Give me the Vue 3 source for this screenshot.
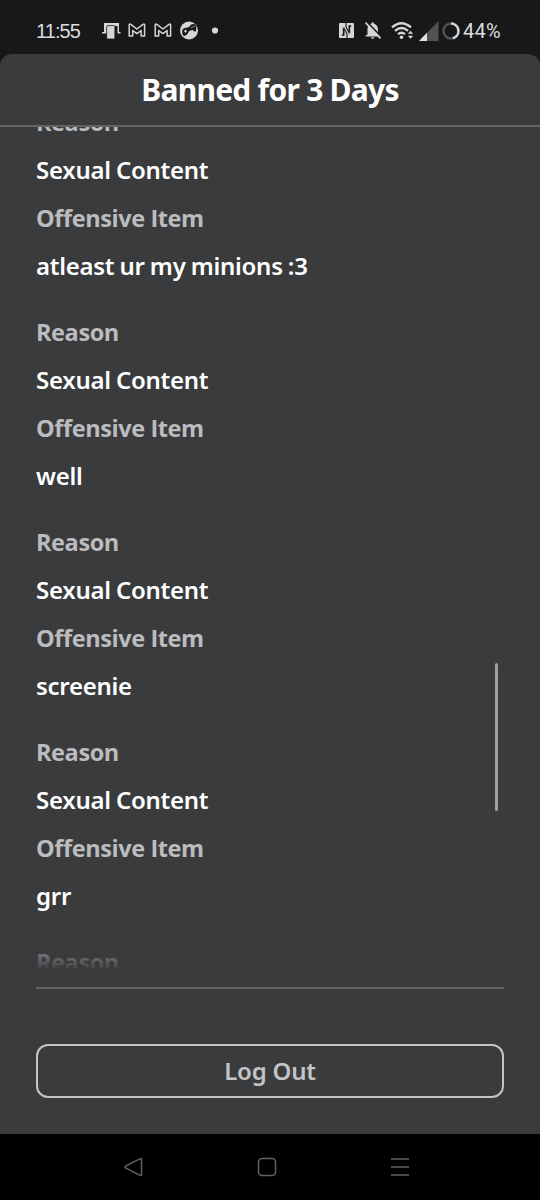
<script setup>
const violations = [
  { reason: 'Sexual Content', item: 'atleast ur my minions :3' },
  { reason: 'Sexual Content', item: 'well' },
  { reason: 'Sexual Content', item: 'screenie' },
  { reason: 'Sexual Content', item: 'grr' },
]
</script>

<template>
  <div class="phone">
    <header class="status">
      <span class="clock">11:55</span>
      <svg class="notifications" width="120" height="20" viewBox="0 0 120 20" fill="none">
        <path d="M2 2h15v9h1.500v1.600h-3V5H5v7.600H0V11h2z" fill="#d6d6d8" />
        <rect x="4.700" y="4.600" width="8.200" height="13.400" rx="1" fill="#d6d6d8" stroke="#17181a" stroke-width=".8" />
        <g stroke="#d6d6d8" stroke-width="1.500" stroke-linejoin="round">
          <path d="M27.200 4q0-1.500 1.600-.7L34.900 8 41 3.300q1.600-.8 1.600.7V15h-3.500V9.500L34.900 12.600 30.700 9.500V15h-3.500z" />
          <path d="M53.200 4q0-1.500 1.600-.7L60.900 8 67 3.300q1.600-.8 1.600.7V15h-3.500V9.500l-4.200 3.100-4.200-3.100V15h-3.500z" />
        </g>
        <circle cx="87" cy="9.500" r="9" fill="#d6d6d8" />
        <path d="M80.200 9.600q1-3.400 4.300-2.800l2.600-.9q2-4 5.800-2.600 2.400 2.400 1 6.600-1.400 1.400-3-1l-2.700.7q-1.700.5-2.300 2.600-1.600 3.200-4.400 2.600-1.700-1.600-1.300-5.200z" fill="#17181a" />
        <path d="M82 10.200h3M83.500 8.700v3M89.300 6.400h1.200M91.300 5.400h1.200" stroke="#d6d6d8" />
        <circle cx="113" cy="9.500" r="3.100" fill="#d6d6d8" />
      </svg>
      <svg class="system" width="124" height="22" viewBox="0 0 124 22" fill="none">
        <rect x="0" y="3" width="15" height="15" rx="1" fill="#d6d6d8" />
        <path d="M2.800 15H4.600V6.500M12.200 6H10.400v8.500" stroke="#17181a" stroke-width="1.500" />
        <path d="M4 6l2.500-.8 5 8.500-1 1.300H8.500L4 8z" fill="#d6d6d8" />
        <path d="M4.700 15.500V7.800L8 14v4M10.300 5.500v7.700L7 7V3" stroke="#17181a" stroke-width="1.100" />
        <path d="M28.500 14.500V9.300q0-4.500 4-5.500V2.500h2.400v1.300q4 1 4 5.500v4.200l2 2.200v.7H26.500v-.7zM32 17.200h3.400q-.4 1.600-1.700 1.600T32 17.200" fill="#d6d6d8" />
        <path d="M27.700 1.600 42.500 17" stroke="#17181a" stroke-width="1.600" />
        <path d="M26.500 2.600 41.500 18.400" stroke="#d6d6d8" stroke-width="1.600" />
        <g stroke="#d6d6d8" stroke-width="2.300">
          <path d="M53 7.400q9.500-8.400 19 0M56 10.800q6.500-5.600 13 0M59 14.200q3.500-3 7 0" />
        </g>
        <circle cx="62.500" cy="17.200" r="1.800" fill="#d6d6d8" />
        <path d="m71.500 10.800 2.700 3h-5.400zM71.500 18.800l2.700-3h-5.400z" fill="#d6d6d8" />
        <path d="M99.500 1v20H80z" fill="#505153" />
        <path d="M88 12.800V21h-8z" fill="#e2e2e4" />
        <circle cx="112" cy="11" r="7.500" stroke="#505153" stroke-width="2.500" />
        <path d="M112 3.500a7.500 7.500 0 0 1 2 14.700" stroke="#d6d6d8" stroke-width="2.500" />
      </svg>
      <span class="battery">44%</span>
    </header>

    <main class="sheet">
      <h1 class="title">Banned for 3 Days</h1>
      <section class="list">
        <div class="track">
          <article v-for="(entry, i) in violations" :key="i" class="entry">
            <p class="label">Reason</p>
            <p>{{ entry.reason }}</p>
            <p class="label">Offensive Item</p>
            <p>{{ entry.item }}</p>
          </article>
          <article class="entry">
            <p class="label">Reason</p>
          </article>
        </div>
        <div class="fade"></div>
        <div class="scrollbar"></div>
      </section>
      <footer class="actions">
        <button class="logout">Log Out</button>
      </footer>
    </main>

    <nav class="navbar">
      <svg width="20" height="20" viewBox="0 0 20 20"><path d="M17.500 1.900v16q-.2.900-1.200.4L1.500 10.800q-.8-.8 0-1.600L16.300 1.700q1-.6 1.200.2z" /></svg>
      <svg width="20" height="20" viewBox="0 0 20 20"><rect x="1.500" y="1.500" width="17" height="17" rx="3.500" /></svg>
      <svg width="20" height="20" viewBox="0 0 20 20"><path d="M1 2h18M1 10h18M1 18h18" /></svg>
    </nav>
  </div>
</template>

<style>
body { margin: 0; background: #17181a; }
</style>

<style scoped>
.phone {
  width: 540px;
  height: 1200px;
  display: flex;
  flex-direction: column;
  overflow: hidden;
  background: #17181a;
  color: #fff;
  font-family: "Noto Sans", sans-serif;
}
.status {
  height: 54px;
  flex: none;
  box-sizing: border-box;
  padding: 8px 0 0 36px;
  display: flex;
  align-items: center;
  color: #dcdcde;
  font: 400 20px/24px Roboto, sans-serif;
}
.clock {
  width: 66px;
  font-family: "Liberation Sans", sans-serif;
  font-size: 20px;
  letter-spacing: -.9px;
}
.notifications { flex: none; margin-right: 117px; }
.system { flex: none; }
.battery { letter-spacing: .2px; }
.sheet {
  height: 1080px;
  flex: none;
  display: flex;
  flex-direction: column;
  background: #3a3b3d;
  border-radius: 12px 12px 0 0;
}
.title {
  margin: 0;
  height: 73px;
  box-sizing: border-box;
  border-bottom: 2px solid #626365;
  text-align: center;
  font-size: 30px;
  font-weight: 700;
  line-height: 72px;
  letter-spacing: -.75px;
}
.list {
  position: relative;
  height: 862px;
  margin: 0 36px;
  box-sizing: border-box;
  border-bottom: 2px solid #626365;
  overflow: hidden;
}
.track { margin-top: -29px; }
.entry { margin-bottom: 18px; }
.entry p {
  margin: 0;
  height: 48px;
  font-size: 24px;
  font-weight: 600;
  line-height: 48px;
  letter-spacing: -.27px;
  word-spacing: -.8px;
  white-space: nowrap;
}
.entry .label {
  color: #bcbcbe;
  font-family: "Open Sans", sans-serif;
  font-weight: 700;
  font-size: 23.500px;
  letter-spacing: -.4px;
  word-spacing: 0;
}
.fade {
  position: absolute;
  inset: auto 0 0 0;
  height: 56px;
  background: linear-gradient(#3a3b3d00, #3a3b3de8 37px, #3a3b3d 37px);
}
.scrollbar {
  position: absolute;
  top: 536px;
  right: 6px;
  width: 3px;
  height: 148px;
  border-radius: 2px;
  background: #a0a0a1;
}
.actions { padding: 55px 36px 0; }
.logout {
  width: 100%;
  height: 54px;
  padding: 0;
  border: 2px solid #c4c4c6;
  border-radius: 12px;
  background: none;
  color: #c4c4c6;
  font: 600 24px/48px "Noto Sans", sans-serif;
  letter-spacing: -.2px;
}
.navbar {
  flex: 1;
  display: flex;
  align-items: center;
  justify-content: center;
  gap: 113px;
  padding-right: 6px;
  background: #000;
}
.navbar svg { fill: none; stroke: #626262; stroke-width: 1.500; }
</style>
